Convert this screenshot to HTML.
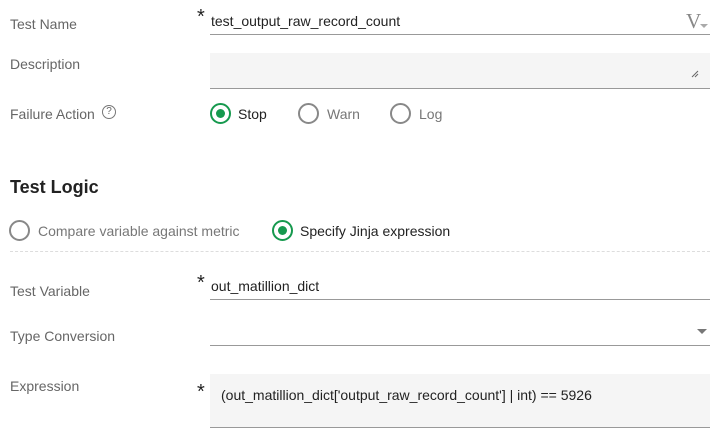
<!DOCTYPE html>
<html><head><style>
body{margin:0;width:719px;height:437px;background:#fff;font-family:"Liberation Sans",sans-serif;position:relative;overflow:hidden}
.a{position:absolute;white-space:nowrap}
.lbl{color:#666;font-size:14px}
.t{color:#222;font-size:14px}
.ul{position:absolute;left:210px;width:500px;height:1px;background:#999}
.box{position:absolute;left:210px;width:500px;background:#f5f5f5;border-bottom:1px solid #999}
.r{position:absolute;width:16px;height:16px;border:2px solid #888;border-radius:50%;box-sizing:border-box}
.r.on{border-color:#16994e}
.r.on::after{content:"";position:absolute;left:50%;top:50%;width:9px;height:9px;margin:-4.5px 0 0 -4.5px;border-radius:50%;background:#16994e}
.ast{position:absolute;font-size:20px;color:#222}
</style></head><body>
<div class="a lbl" style="left:10px;top:16px">Test Name</div>
<div class="ast" style="left:197px;top:6px">*</div>
<div class="a t" style="left:211px;top:13px">test_output_raw_record_count</div>
<div class="a" style="left:686px;top:9px;font-family:'Liberation Serif',serif;font-size:21px;color:#888">V</div>
<div class="a" style="left:700px;top:24px;width:0;height:0;border-left:4px solid transparent;border-right:4px solid transparent;border-top:4px solid #aaa"></div>
<div class="ul" style="top:34px"></div>

<div class="a lbl" style="left:10px;top:56px">Description</div>
<div class="box" style="top:53px;height:35px"></div>
<svg class="a" style="left:691px;top:70px" width="8" height="8"><path d="M1 7L7 1M4 7L7 4" stroke="#666" stroke-width="1"/></svg>

<div class="a lbl" style="left:10px;top:106px">Failure Action</div>
<div class="a" style="left:102px;top:105px;width:14px;height:14px;border:1px solid #777;border-radius:50%;box-sizing:border-box;font-size:10px;line-height:12px;text-align:center;color:#666">?</div>
<div class="r on" style="left:210px;top:103px;width:21px;height:21px"></div>
<div class="a t" style="left:238px;top:106px">Stop</div>
<div class="r" style="left:298px;top:103px;width:21px;height:21px"></div>
<div class="a lbl" style="left:327px;top:106px;color:#777">Warn</div>
<div class="r" style="left:390px;top:103px;width:21px;height:21px"></div>
<div class="a lbl" style="left:419px;top:106px;color:#777">Log</div>

<div class="a" style="left:10px;top:177px;font-size:18px;font-weight:bold;color:#222">Test Logic</div>

<div class="r" style="left:9px;top:220px;width:21px;height:21px"></div>
<div class="a lbl" style="left:38px;top:223px;color:#777">Compare variable against metric</div>
<div class="r on" style="left:272px;top:220px;width:21px;height:21px"></div>
<div class="a t" style="left:300px;top:223px">Specify Jinja expression</div>
<div class="a" style="left:10px;top:251px;width:700px;border-top:1px dashed #ddd"></div>

<div class="a lbl" style="left:10px;top:283px">Test Variable</div>
<div class="ast" style="left:197px;top:272px">*</div>
<div class="a t" style="left:211px;top:278px">out_matillion_dict</div>
<div class="ul" style="top:299px"></div>

<div class="a lbl" style="left:10px;top:328px">Type Conversion</div>
<div class="a" style="left:697px;top:329px;width:0;height:0;border-left:5px solid transparent;border-right:5px solid transparent;border-top:5px solid #777"></div>
<div class="ul" style="top:345px"></div>

<div class="a lbl" style="left:10px;top:378px">Expression</div>
<div class="box" style="top:374px;height:53px"></div>
<div class="ast" style="left:197px;top:381px">*</div>
<div class="a t" style="left:221px;top:387px">(out_matillion_dict['output_raw_record_count'] | int) == 5926</div>
</body></html>
